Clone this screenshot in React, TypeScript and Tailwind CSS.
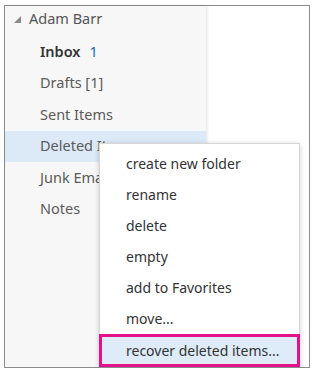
import React from "react";

const FOLDERS = [
  { name: "Inbox", count: "1", bold: true },
  { name: "Drafts [1]" },
  { name: "Sent Items" },
  { name: "Deleted Items", selected: true },
  { name: "Junk Email" },
  { name: "Notes" },
];

const MENU = [
  "create new folder",
  "rename",
  "delete",
  "empty",
  "add to Favorites",
  "move...",
];

export default function App() {
  return (
    <div
      className="relative w-[315px] h-[372px] bg-white overflow-hidden"
      style={{ fontFamily: '"Segoe UI", "Noto Sans", sans-serif' }}
    >
      <div className="absolute left-[4px] top-[5px] w-[306px] h-[363px] border border-[#8c8c8c] flex bg-white">
        {/* folder pane */}
        <div className="w-[201px] h-full bg-[#f7f7f7] shadow-[1px_0_3px_rgba(0,0,0,0.12)] flex flex-col">
          <div className="h-[26px] flex items-center pl-[9px] text-[14.5px] text-[#555]">
            <svg width="8" height="8" viewBox="0 0 8 8" className="mr-[7px] mt-[2px]">
              <polygon points="7,0 7,7 0,7" fill="#8a8a8a" />
            </svg>
            Adam Barr
          </div>
          <div className="mt-[4px]">
            {FOLDERS.map((f) => (
              <div
                key={f.name}
                className={`h-[31.5px] flex items-center pl-[35px] text-[14.5px] whitespace-nowrap ${
                  f.selected ? "bg-[#dce9f7]" : ""
                }`}
              >
                <span className={f.bold ? "font-semibold text-[#333]" : "text-[#5a5a5a]"}>{f.name}</span>
                {f.count && <span className="ml-[9px] text-[#0a6ec8]">{f.count}</span>}
              </div>
            ))}
          </div>
        </div>
        <div className="flex-1" />
      </div>

      {/* context menu */}
      <div className="absolute left-[99px] top-[143px] w-[201px] h-[230px] bg-white border border-[#d6d6d6] shadow-[0_1px_5px_rgba(0,0,0,0.2)] pt-[4px]">
        {MENU.map((m) => (
          <div key={m} className="h-[31px] flex items-center pl-[26px] text-[14px] text-[#333]">
            {m}
          </div>
        ))}
        <div className="h-[33px] flex items-center pl-[24px] text-[14px] text-[#333] bg-[#deebf8] border-[3px] border-[#e3118c] -mx-px">
          recover deleted items...
        </div>
      </div>
      <div className="absolute left-0 top-[367px] w-[315px] h-[5px] bg-white" />
      <div className="absolute left-[4px] top-[367px] w-[306px] h-px bg-[#8c8c8c]" />
    </div>
  );
}
